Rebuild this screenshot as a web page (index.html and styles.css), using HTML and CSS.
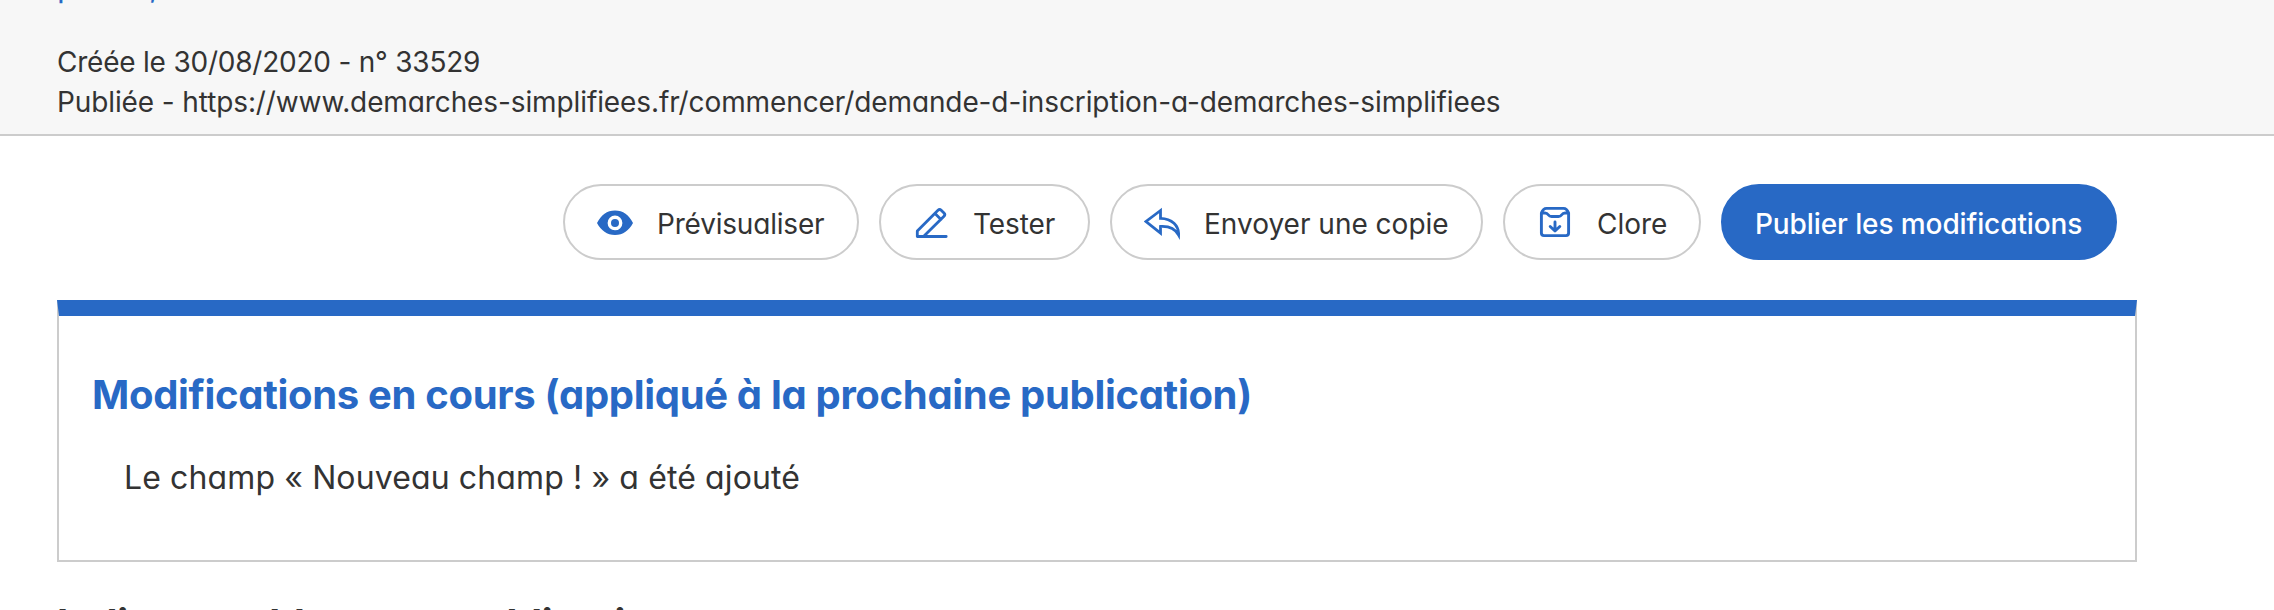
FILE: index.html
```html
<!DOCTYPE html>
<html lang="fr">
<head>
<meta charset="utf-8">
<title>Démarche</title>
<link rel="stylesheet" href="styles.css">
</head>
<body>
<header class="procedure-header">
  <a class="title">public,</a>
  <p class="meta created">Créée le 30/08/2020 - n° 33529</p>
  <p class="meta published">Publiée - https://www.demarches-simplifiees.fr/commencer/demande-d-inscription-a-demarches-simplifiees</p>
</header>
<main class="container">
  <nav class="actions">
    <a class="button preview">
      <svg class="icon" viewBox="0 0 36 36"><path fill="currentColor" fill-rule="evenodd" d="M0 19C4 11 10 6.500 18 6.500S32 11 36 19C32 26.500 26 31 18 31S4 26.500 0 19ZM18 11.500a7.400 7.400 0 1 0 0 14.800a7.400 7.400 0 0 0 0-14.800Z"/><circle cx="18" cy="19" r="4" fill="currentColor"/></svg>
      <span class="label">Prévisualiser</span>
    </a>
    <a class="button test">
      <svg class="icon" viewBox="0 0 36 36"><g fill="none" stroke="currentColor" stroke-width="2.800" stroke-linejoin="round" stroke-linecap="round"><path d="M4.300 32.500V27L25 6.200Q26.600 4.600 28.200 6.200L31 9Q32.600 10.600 31 12.200L10.500 32.500M4.300 32.500H33.200M22 9.500L28 15.500"/></g></svg>
      <span class="label">Tester</span>
    </a>
    <a class="button copy">
      <svg class="icon" viewBox="0 0 36 36"><path fill="none" stroke="currentColor" stroke-width="2.800" stroke-linejoin="miter" d="M16.500 6.500L2 17.500L16.500 29V22.500C25 22 31 24.500 34.600 31C35 22 28 14.500 16.500 14.300Z"/></svg>
      <span class="label">Envoyer une copie</span>
    </a>
    <a class="button close">
      <svg class="icon" viewBox="0 0 36 36"><g fill="none" stroke="currentColor" stroke-width="2.900" stroke-linejoin="round" stroke-linecap="round"><path d="M4.400 9V29Q4.400 31.600 7 31.600H29Q31.600 31.600 31.600 29V9Q30 4.400 26.500 4.400H9.500Q6 4.400 4.400 9H8Q10 9 11.500 11Q12.500 12.500 14.500 12.500H21.500Q23.500 12.500 24.500 11Q26 9 28 9H31.600M18 18V26.500M13.200 22.500L18 27L22.800 22.500"/></g></svg>
      <span class="label">Clore</span>
    </a>
    <a class="button primary"><span class="label">Publier les modifications</span></a>
  </nav>
  <section class="card">
    <h2 class="card-title">Modifications en cours (appliqué à la prochaine publication)</h2>
    <ul class="changes"><li class="change">Le champ « Nouveau champ ! » a été ajouté</li></ul>
  </section>
  <h2 class="section-title">Indispensable avant publication</h2>
</main>
</body>
</html>
```
FILE: styles.css
```css
* { box-sizing: border-box; }
html, body { height: 610px; overflow: hidden; }
body {
  margin: 0;
  background: #fff;
  color: #333;
  font-family: Inter, Lato, sans-serif;
  font-feature-settings: "cv11", "calt" 0;
  font-size: 28px;
  line-height: 40px;
}
.procedure-header {
  display: flow-root;
  height: 136px;
  padding-left: 57px;
  background: #f7f7f7;
  border-bottom: 2px solid #ccc;
}
.title { display: block; height: 42px; margin-top: -35px; margin-bottom: 35px; font-size: 32px; line-height: 42px; color: #2869c5; }
.meta { margin: 0; white-space: nowrap; }
.created { letter-spacing: -0.22px; }
.published { letter-spacing: -0.11px; }
.container { width: 2080px; height: 474px; margin-left: 57px; overflow: hidden; }
.actions { display: flex; justify-content: flex-end; gap: 20px; padding: 48px 20px 40px 0; }
.button {
  display: flex;
  align-items: center;
  height: 76px;
  padding-left: 32px;
  border: 2px solid #ccc;
  border-radius: 38px;
  white-space: nowrap;
}
.icon { flex: none; width: 36px; height: 36px; margin-right: 24px; color: #2869c5; }
.preview { width: 296px; letter-spacing: -0.2px; }
.test { width: 211px; letter-spacing: -0.1px; }
.copy { width: 373px; }
.close { width: 198px; }
.primary { width: 396px; background: #2869c5; border-color: #2869c5; color: #fff; font-weight: 500; letter-spacing: -0.1px; }
.label { padding-top: 4px; }
.card { height: 262px; padding: 56px 33px; border: 2px solid #ccc; border-top: 16px solid #2869c5; }
.card-title { margin: 0; font-size: 40px; line-height: 46px; font-weight: 700; letter-spacing: -0.32px; color: #2869c5; white-space: nowrap; }
.changes { margin: 40px 0 0; padding: 0 0 0 32px; list-style: none; font-size: 32px; letter-spacing: 0.12px; }
.change { white-space: nowrap; }
.section-title { margin: 38px 0 0; font-size: 40px; line-height: 48px; font-weight: 700; letter-spacing: -0.4px; }
```
